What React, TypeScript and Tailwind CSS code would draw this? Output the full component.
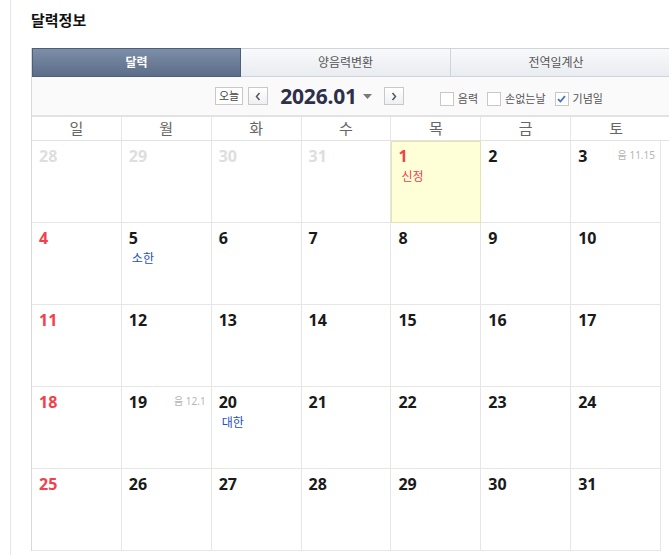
import React from 'react';

type Day = {
  n: number;
  muted?: boolean;
  red?: boolean;
  today?: boolean;
  label?: string;
  labelColor?: 'red' | 'blue';
  lunar?: string;
};

const weeks: Day[][] = [
  [
    { n: 28, muted: true },
    { n: 29, muted: true },
    { n: 30, muted: true },
    { n: 31, muted: true },
    { n: 1, red: true, today: true, label: '신정', labelColor: 'red' },
    { n: 2 },
    { n: 3, lunar: '11.15' },
  ],
  [
    { n: 4, red: true },
    { n: 5, label: '소한', labelColor: 'blue' },
    { n: 6 },
    { n: 7 },
    { n: 8 },
    { n: 9 },
    { n: 10 },
  ],
  [
    { n: 11, red: true },
    { n: 12 },
    { n: 13 },
    { n: 14 },
    { n: 15 },
    { n: 16 },
    { n: 17 },
  ],
  [
    { n: 18, red: true },
    { n: 19, lunar: '12.1' },
    { n: 20, label: '대한', labelColor: 'blue' },
    { n: 21 },
    { n: 22 },
    { n: 23 },
    { n: 24 },
  ],
  [
    { n: 25, red: true },
    { n: 26 },
    { n: 27 },
    { n: 28 },
    { n: 29 },
    { n: 30 },
    { n: 31 },
  ],
];

const dayNames = ['일', '월', '화', '수', '목', '금', '토'];

const Checkbox: React.FC<{ label: string; checked?: boolean }> = ({ label, checked }) => (
  <label className="flex items-center gap-[4px]">
    <span className="flex h-[14px] w-[14px] items-center justify-center border border-[#c8c8c8] bg-white">
      {checked && (
        <svg width="9" height="8" viewBox="0 0 9 8">
          <path d="M1 4.2 L3.4 6.5 L8 1.2" fill="none" stroke="#3f74c4" strokeWidth="1.8" />
        </svg>
      )}
    </span>
    <span className="text-[11px] text-[#555]">{label}</span>
  </label>
);

const Cell: React.FC<{ d: Day }> = ({ d }) => {
  const numColor = d.muted ? 'text-[#dedede]' : d.red ? 'text-[#f2414b]' : 'text-[#1a1a1a]';
  return (
    <div
      className={`relative h-[82px] border-r border-b border-[#e6e6e6] px-[7px] pt-[5px] ${
        d.today ? 'bg-[#ffffd7] outline outline-1 -outline-offset-1 outline-[#e3e3b3]' : 'bg-white'
      }`}
    >
      <div className={`text-[16px] font-bold leading-[20px] ${numColor}`}>{d.n}</div>
      {d.lunar && (
        <div className="absolute right-[5px] top-[8px] text-[10px] leading-[12px] text-[#b5b5b5]">
          음 {d.lunar}
        </div>
      )}
      {d.label && (
        <div
          className={`mt-[3px] pl-[3px] text-[12px] leading-[16px] ${
            d.labelColor === 'red' ? 'text-[#f2414b]' : 'text-[#2251c0]'
          }`}
        >
          {d.label}
        </div>
      )}
    </div>
  );
};

export default function App() {
  return (
    <div
      className="h-[555px] w-[669px] overflow-hidden bg-white"
      style={{ fontFamily: '"Noto Sans", "Noto Sans CJK KR", sans-serif' }}
    >
      <div className="ml-[10px] h-full border-l border-[#e6e6e6] pl-[20px]">
        <h2 className="pt-[8px] text-[15px] font-bold leading-[24px] text-[#111]">달력정보</h2>

        <div className="mt-[16px] w-[660px] border-l border-[#d7d9dd]">
          {/* tabs */}
          <div className="flex h-[29px]">
            <div className="flex w-[209px] items-center justify-center border border-[#4e5e77] bg-gradient-to-b from-[#7d8ea8] to-[#5b6d88] text-[12px] font-bold text-white">
              달력
            </div>
            <div className="flex w-[210px] items-center justify-center border-y border-r border-[#cfd3da] bg-gradient-to-b from-[#f8f9fb] to-[#e9ecf0] text-[12px] text-[#555]">
              양음력변환
            </div>
            <div className="flex w-[240px] items-center justify-center border-y border-[#cfd3da] bg-gradient-to-b from-[#f8f9fb] to-[#e9ecf0] pr-[30px] text-[12px] text-[#555]">
              전역일계산
            </div>
          </div>

          {/* controls */}
          <div className="flex h-[40px] items-center border-b-2 border-[#e2e2e2] bg-[#fafafa]">
            <button className="ml-[183px] h-[18px] border border-[#c8c8c8] bg-white px-[3px] text-[11px] leading-[16px] text-[#444]">
              오늘
            </button>
            <button className="ml-[5px] flex h-[18px] w-[20px] items-center justify-center border border-[#c8c8c8] bg-gradient-to-b from-white to-[#eef0f3]">
              <svg width="6" height="9" viewBox="0 0 6 9">
                <path d="M4.5 1 L1.5 4.5 L4.5 8" fill="none" stroke="#555" strokeWidth="1.5" />
              </svg>
            </button>
            <span className="ml-[12px] text-[21px] font-bold leading-[24px] tracking-[-0.2px] text-[#2e3049]">
              2026.01
            </span>
            <svg className="ml-[6px] mt-[1px]" width="9" height="5" viewBox="0 0 9 5">
              <path d="M0 0 H9 L4.5 5 Z" fill="#7a7a7a" />
            </svg>
            <button className="ml-[12px] flex h-[18px] w-[20px] items-center justify-center border border-[#c8c8c8] bg-gradient-to-b from-white to-[#eef0f3]">
              <svg width="6" height="9" viewBox="0 0 6 9">
                <path d="M1.5 1 L4.5 4.5 L1.5 8" fill="none" stroke="#555" strokeWidth="1.5" />
              </svg>
            </button>
            <div className="ml-[36px] mt-[6px] flex items-center gap-[9px]">
              <Checkbox label="음력" />
              <Checkbox label="손없는날" />
              <Checkbox label="기념일" checked />
            </div>
          </div>

          {/* day names */}
          <div className="border-b border-[#e2e2e2]">
            <div className="grid w-[629px] grid-cols-7">
              {dayNames.map((n, i) => (
                <div
                  key={n}
                  className={`flex h-[23px] items-center justify-center text-[15px] leading-none text-[#666] ${
                    i < 6 ? 'border-r border-[#e6e6e6]' : ''
                  }`}
                >
                  {n}
                </div>
              ))}
            </div>
          </div>

          {/* weeks */}
          <div className="grid w-[629px] grid-cols-7">
            {weeks.flat().map((d, i) => (
              <Cell key={i} d={d} />
            ))}
          </div>
        </div>
      </div>
    </div>
  );
}
